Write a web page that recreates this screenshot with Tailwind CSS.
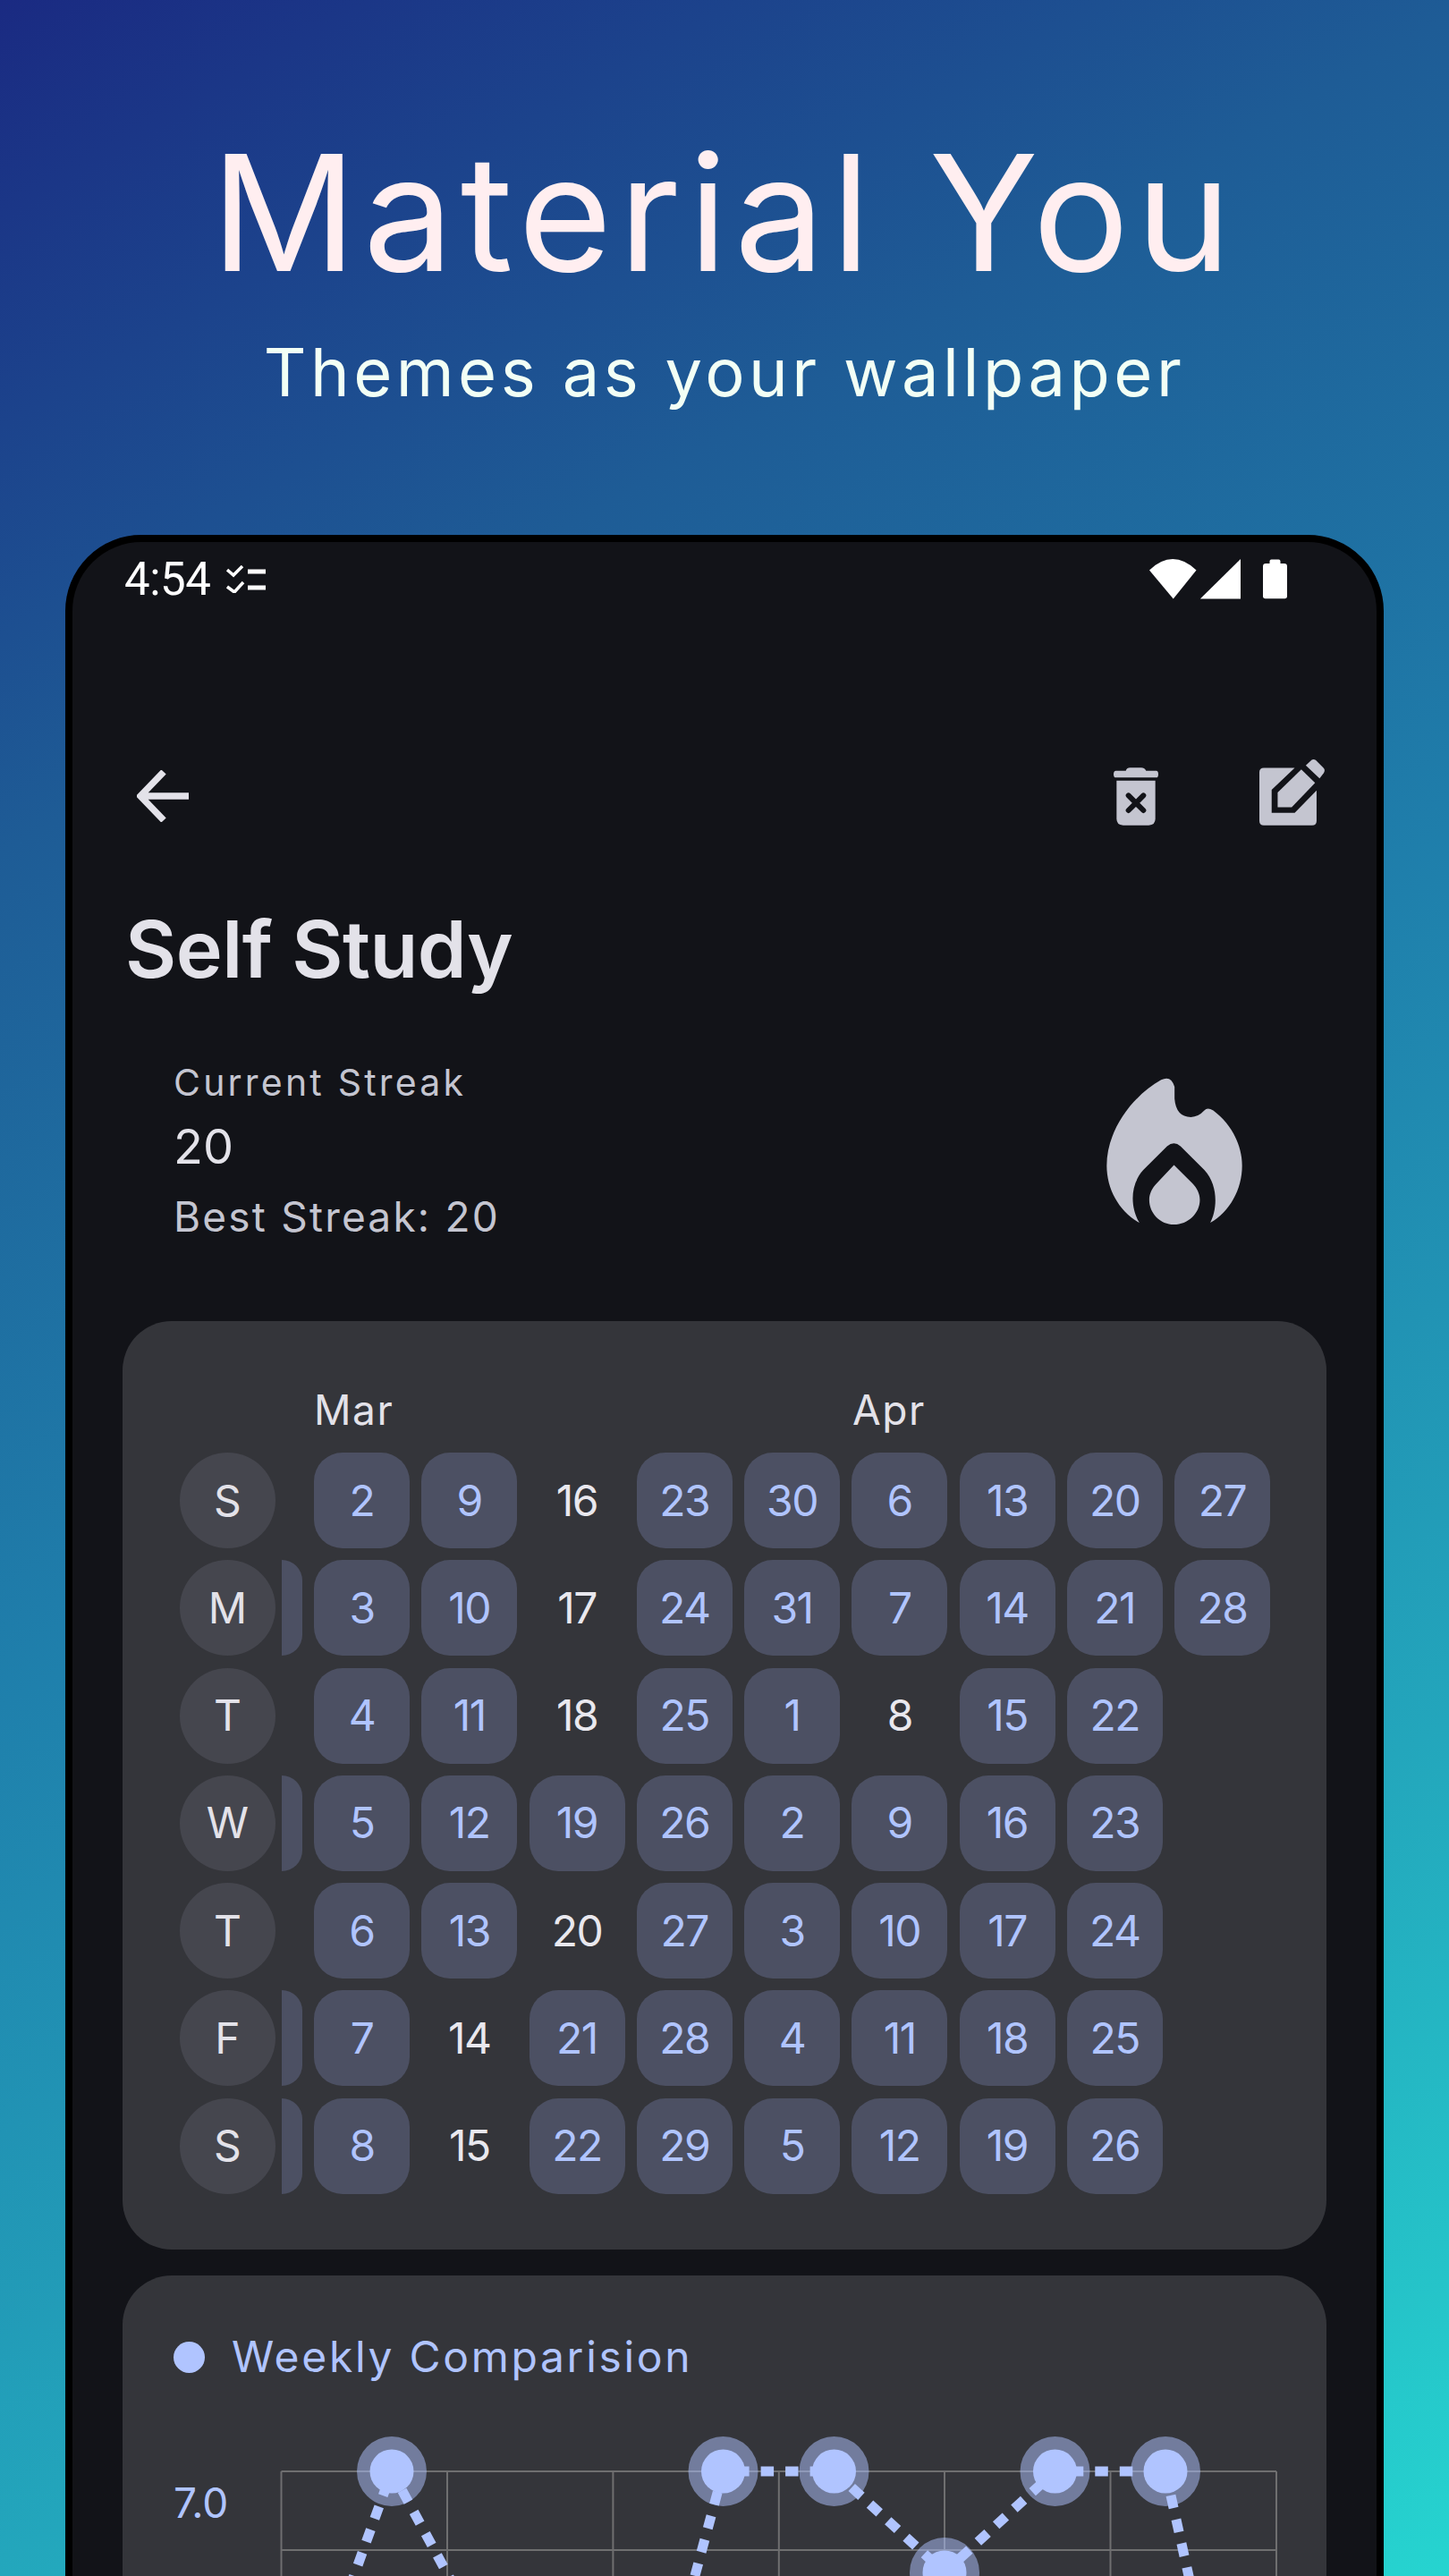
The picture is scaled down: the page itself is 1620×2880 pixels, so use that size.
<!DOCTYPE html>
<html lang="en">
  <head>
    <meta charset="UTF-8" />
    <title>Material You</title>
    <script src="https://cdn.jsdelivr.net/npm/@tailwindcss/browser@4"></script>
  </head>
  <body class="w-[1620px] h-[2880px] overflow-hidden bg-[linear-gradient(150deg,#1a2a82_0%,#1e5c96_25%,#1f80ac_50%,#23a6bc_75%,#26d4d0_100%)] font-['Inter',sans-serif]">
    <!-- Heading -->
    <header class="h-[598px] pt-[148px] flex flex-col items-center">
      <h1 class="text-[180px] leading-[180px] font-normal text-[#ffeef0] tracking-[7.5px]">Material You</h1>
      <p class="mt-[51px] text-[74px] leading-[74px] font-normal text-[#f2fff5] tracking-[4.5px]">Themes as your wallpaper</p>
    </header>

    <!-- Phone -->
    <div class="ml-[73px] w-[1474px] h-[2400px] border-8 border-black rounded-[85px] bg-[#121318] overflow-hidden">
      <!-- Status bar -->
      <div class="h-[82px] pl-[58px] pr-[100px] flex items-center justify-between text-white">
        <div class="flex items-center">
          <span class="mt-[2px] font-['Roboto',sans-serif] text-[51px] leading-[58px] tracking-[-0.5px]">4:54</span>
          <svg class="ml-[18px]" width="45" height="31" viewBox="253 632 45 31" fill="none" stroke="white">
            <path d="M254 637l7 6 10-10M254 656l8 6 10-11" stroke-width="3.5" />
            <path d="M277 639h20M277 657h20" stroke-width="5" />
          </svg>
        </div>
        <div class="flex items-center">
          <svg width="102" height="45" viewBox="555 135 305 134" fill="white">
            <path d="M555 172Q633 98 712 172L635 268Z" />
            <path d="M725 268L860 135V268Z" />
          </svg>
          <svg class="ml-[25px]" width="27" height="45" viewBox="935 134 83 135" fill="white">
            <path d="M958 148V140Q958 134 964 134H989Q995 134 995 140V148H1008Q1018 148 1018 158V260Q1018 268 1010 268H943Q935 268 935 260V158Q935 148 945 148Z" />
          </svg>
        </div>
      </div>

      <!-- Toolbar -->
      <div class="mt-[147px] h-[110px] pl-[72px] pr-[57px] flex items-center justify-between">
        <svg width="58" height="58" viewBox="152 861 58 58" fill="none" stroke="#e3e2e9" stroke-width="7.5">
          <path d="M210 890H157M182 863L156 890L182 917" />
        </svg>
        <div class="flex items-end mb-[9px]">
          <svg width="50" height="65" viewBox="437 835 150 193" fill="#c4c5d0">
            <path d="M445 845H478Q482 835 492 835H530Q540 835 546 845H580Q587 845 587 857Q587 868 580 868H445Q437 868 437 857Q437 845 445 845Z" />
            <path d="M447 878H577V1006Q577 1028 555 1028H469Q447 1028 447 1006Z" />
            <path d="M487 928L537 978M537 928L487 978" stroke="#121318" stroke-width="18" stroke-linecap="round" />
          </svg>
          <svg class="ml-[113px]" width="74" height="75" viewBox="57 24 221 223" fill="#c4c5d0">
            <path d="M72 55H175L98 128V205H175L248 130V232Q248 247 233 247H72Q57 247 57 232V70Q57 55 72 55Z" />
            <path d="M118 186V137L197 60L243 105L165 186Z" />
            <path d="M212 47L232 28Q238 24 245 29L271 55Q278 62 272 72L258 90Z" />
          </svg>
        </div>
      </div>

      <h2 class="mt-[72px] pl-[59px] text-[88px] leading-[88px] font-semibold text-[#e3e2e9] tracking-[-0.5px]">Self Study</h2>

      <!-- Streak -->
      <div class="mt-[80px] pl-[113px] pr-[150px] flex items-start justify-between">
        <div>
          <div class="text-[41px] leading-[50px] text-[#c4c5d0] tracking-[3.2px]">Current Streak</div>
          <div class="mt-[17px] text-[54px] leading-[60px] text-[#e3e2e9]">20</div>
          <div class="mt-[20px] text-[46px] leading-[56px] text-[#c4c5d0] tracking-[2.2px]">Best Streak: 20</div>
        </div>
        <svg class="mt-[20px]" width="152" height="164" viewBox="262 135 455 493" fill="#c4c5d0">
          <path d="M445 142Q478 125 490 165V205Q495 267 545 267Q570 267 590 245Q600 232 620 245C680 290 717 360 717 430C717 510 675 585 610 622C632 580 640 500 590 445L510 365Q488 345 465 365L385 445C335 500 345 580 372 622C305 585 262 510 262 430C262 310 350 195 445 142Z" />
          <path d="M488 428L550 490C565 505 575 525 575 545C575 590 535 628 488 628C442 628 405 590 405 545C405 525 415 505 430 490Z" />
        </svg>
      </div>

      <!-- Calendar card -->
      <section class="mt-[89px] mx-[56px] h-[1038px] rounded-[55px] bg-[#34353a] pt-[71px] pl-[64px]">
        <div class="flex ml-[150px] text-[46px] leading-[56px] text-[#e3e2e9] tracking-[1.5px]">
          <span class="w-[602px]">Mar</span>
          <span>Apr</span>
        </div>
        <div id="heatmap" class="mt-[20px] flex flex-col gap-y-[13.3px]"></div>
      </section>

      <!-- Chart card -->
      <section class="mt-[29px] mx-[56px] h-[700px] rounded-[55px] bg-[#34353a] pt-[62px] pl-[57px]">
        <div class="flex items-center text-[48px] leading-[58px] text-[#b0c4ff]">
          <span class="w-[35px] h-[35px] rounded-full bg-[#b0c4ff]"></span>
          <span class="ml-[30px] tracking-[2.7px]">Weekly Comparision</span>
        </div>
        <div class="mt-[36px] flex items-start">
          <div class="w-[106px] mt-[70px] text-[46px] leading-[56px] text-[#b0c4ff]">7.0</div>
          <svg width="1140" height="500" viewBox="300 2700 1140 500" fill="none">
            <g stroke="#6f6f70" stroke-width="2">
              <path d="M314.5 2763H1427M314.5 2851H1427M314.5 2939H1427" />
              <path d="M314.5 2763V3200M500 2763V3200M685.4 2763V3200M870.8 2763V3200M1056 2763V3200M1241.5 2763V3200M1427 2763V3200" />
            </g>
            <g fill="#b0c4ff" fill-opacity="0.5">
              <circle cx="438" cy="2763" r="39" />
              <circle cx="808.5" cy="2763" r="39" />
              <circle cx="932.5" cy="2763" r="39" />
              <circle cx="1056" cy="2876" r="39" />
              <circle cx="1179.5" cy="2763" r="39" />
              <circle cx="1303" cy="2763" r="39" />
            </g>
            <g stroke="#b0c4ff" stroke-width="11" stroke-dasharray="14.5 13">
              <path d="M438 2763L314.5 3104" stroke-dashoffset="13.25" />
              <path d="M438 2763L561.7 2991" stroke-dashoffset="3.25" />
              <path d="M808.5 2763L685 3220" stroke-dashoffset="3.5" />
              <path d="M808.5 2763H932.5" stroke-dashoffset="12.9" />
              <path d="M932.5 2763L1056 2876" stroke-dashoffset="0.75" />
              <path d="M1056 2876L1179.5 2763" stroke-dashoffset="4.35" />
              <path d="M1179.5 2763H1303" stroke-dashoffset="10.2" />
              <path d="M1303 2763L1427 3321" />
            </g>
            <g fill="#b0c4ff">
              <circle cx="438" cy="2763" r="24.5" />
              <circle cx="808.5" cy="2763" r="24.5" />
              <circle cx="932.5" cy="2763" r="24.5" />
              <circle cx="1056" cy="2876" r="24.5" />
              <circle cx="1179.5" cy="2763" r="24.5" />
              <circle cx="1303" cy="2763" r="24.5" />
            </g>
          </svg>
        </div>
      </section>
    </div>

    <script>
      // rows are weekdays, a trailing * means the day has no check-in
      const rows = [
        ["S", false, "2 9 16* 23 30 6 13 20 27"],
        ["M", true, "3 10 17* 24 31 7 14 21 28"],
        ["T", false, "4 11 18* 25 1 8* 15 22"],
        ["W", true, "5 12 19 26 2 9 16 23"],
        ["T", false, "6 13 20* 27 3 10 17 24"],
        ["F", true, "7 14* 21 28 4 11 18 25"],
        ["S", true, "8 15* 22 29 5 12 19 26"],
      ];
      const cell = "w-[107px] h-[107px] flex items-center justify-center text-[48px] leading-none tracking-[-1.5px]";
      const done = cell + " rounded-[32px] bg-[#4c5063] text-[#b0c4ff]";
      const missed = cell + " text-[#e9e8ee]";
      document.getElementById("heatmap").innerHTML = rows
        .map(([day, sliver, days]) => {
          const cells = days
            .split(" ")
            .map((d) =>
              d.endsWith("*")
                ? `<div class="${missed}">${d.slice(0, -1)}</div>`
                : `<div class="${done}">${d}</div>`
            )
            .join("");
          const edge = sliver ? "bg-[#4c5063] rounded-r-[32px]" : "";
          return `<div class="flex h-[107px]">
            <div class="w-[107px] h-[107px] rounded-full bg-[#45464e] flex items-center justify-center text-[48px] leading-none text-[#e3e2e9]">${day}</div>
            <div class="ml-[6.5px] w-[23px] h-[107px] ${edge}"></div>
            <div class="ml-[13.5px] flex gap-x-[13.25px]">${cells}</div>
          </div>`;
        })
        .join("");
    </script>
  </body>
</html>
